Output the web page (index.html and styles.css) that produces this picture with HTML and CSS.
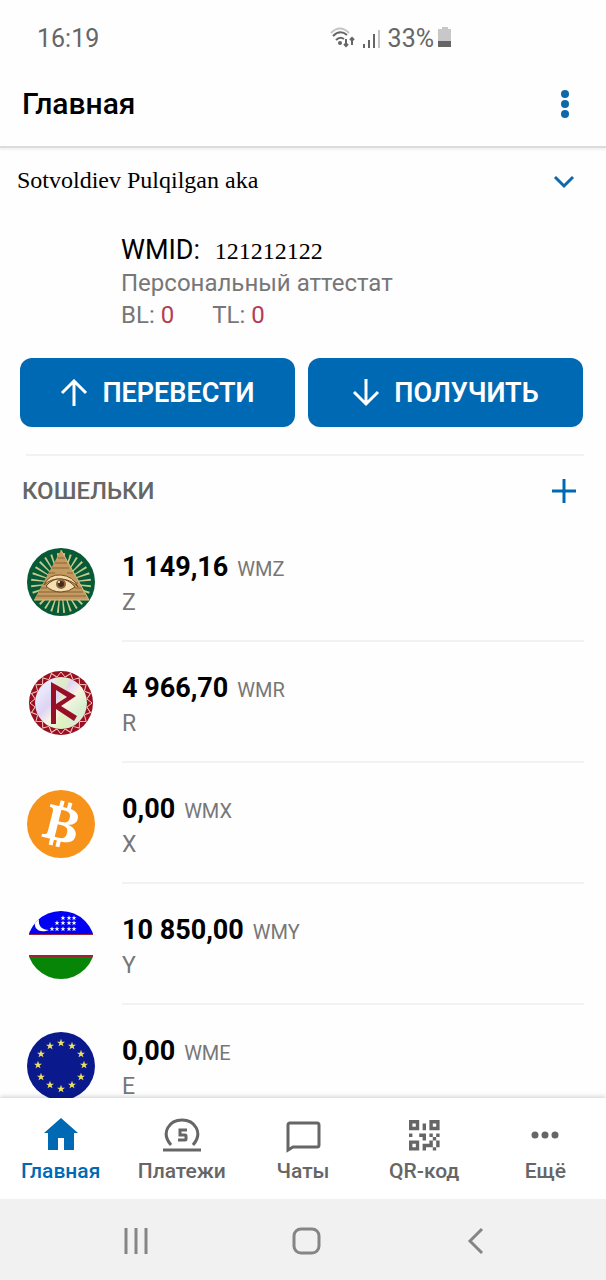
FILE: index.html
```html
<!DOCTYPE html>
<html lang="ru">
<head>
  <meta charset="UTF-8">
  <title>Главная</title>
  <meta name="viewport" content="width=device-width,initial-scale=1">
  <link rel="stylesheet" href="styles.css">
</head>
<body>
  <div class="status-bar">
    <span>16:19</span>
    <div class="status-icons">
      <svg class="wifi" width="28" height="24" viewBox="0 0 28 24" fill="none" stroke-width="2">
        <path d="M2 7Q11-2 20 7" stroke="#c4c4c4"/>
        <path d="M4 10Q11 3 18 9M7 14Q11 10 15 13" stroke="#666"/>
        <circle cx="11" cy="17" r="2" fill="#666"/>
        <path d="M17 13v7M15 18l2 2 2-2M23 19v-7M21 14l2-2 2 2" stroke="#666"/>
      </svg>
      <svg class="signal" width="20" height="22" viewBox="0 0 20 22" stroke-width="2">
        <path d="M3 17v4M8 13v8M13 7v14" stroke="#666"/>
        <path d="M18 3v18" stroke="#c4c4c4"/>
      </svg>
      <span>33%</span>
      <svg class="battery" width="14" height="24" viewBox="0 0 14 24">
        <path d="M4 1h6v2h3v13H0V3h4z" fill="#c8c8c8"/>
        <path d="M0 15h13v6H0z" fill="#666"/>
      </svg>
    </div>
  </div>

  <header class="header">
    <h1>Главная</h1>
    <button class="icon-btn" aria-label="Меню">
      <svg width="28" height="32" viewBox="0 0 28 32" fill="#0f68a8">
        <circle cx="14" cy="6" r="4"/><circle cx="14" cy="16" r="4"/><circle cx="14" cy="26" r="4"/>
      </svg>
    </button>
  </header>

  <main class="content">
    <div class="owner">
      <span>Sotvoldiev Pulqilgan aka</span>
      <button class="icon-btn" aria-label="Развернуть">
        <svg width="28" height="28" viewBox="0 0 28 28" fill="none" stroke="#0f68a8" stroke-width="3">
          <path d="M5 11l9 9 9-9"/>
        </svg>
      </button>
    </div>

    <div class="passport">
      <div class="wmid">WMID: <span class="wmid-number">121212122</span></div>
      <div>Персональный аттестат</div>
      <div class="levels"><span>BL: <b>0</b></span><span>TL: <b>0</b></span></div>
    </div>

    <div class="actions">
      <button>
        <svg width="28" height="28" viewBox="0 0 28 28" fill="none" stroke="#fff" stroke-width="3">
          <path d="M14 27V2M2 14L14 2l12 12"/>
        </svg>
        ПЕРЕВЕСТИ
      </button>
      <button>
        <svg width="28" height="28" viewBox="0 0 28 28" fill="none" stroke="#fff" stroke-width="3">
          <path d="M14 0v25M2 13l12 12 12-12"/>
        </svg>
        ПОЛУЧИТЬ
      </button>
    </div>

    <section class="wallets">
      <div class="wallets-head">
        <h2>КОШЕЛЬКИ</h2>
        <button class="icon-btn" aria-label="Добавить">
          <svg width="28" height="28" viewBox="0 0 28 28" stroke="#0069b4" stroke-width="3">
            <path d="M14 2v24M2 14h24"/>
          </svg>
        </button>
      </div>

      <ul>
        <li>
          <svg class="coin" viewBox="0 0 68 68">
            <defs>
              <path id="ray" d="M0 0L-1-30H1z"/>
              <g id="rays">
                <use href="#ray" transform="rotate(6)"/>
                <use href="#ray" transform="rotate(19)"/>
                <use href="#ray" transform="rotate(32)"/>
                <use href="#ray" transform="rotate(45)"/>
                <use href="#ray" transform="rotate(58)"/>
                <use href="#ray" transform="rotate(71)"/>
                <use href="#ray" transform="rotate(84)"/>
              </g>
            </defs>
            <circle cx="34" cy="34" r="34" fill="#075a35"/>
            <g transform="translate(34 35)" fill="#c3cb8e">
              <use href="#rays"/>
              <use href="#rays" transform="rotate(90)"/>
              <use href="#rays" transform="rotate(180)"/>
              <use href="#rays" transform="rotate(270)"/>
            </g>
            <path d="M34 2L62 52H7z" fill="#c49a60"/>
            <path d="M31 10h7M28 15h12M25 20h17M22 25h6M40 25h6M17 35h3M48 35h3M14 40h6M48 40h7M12 44h44M10 48h49" stroke="#8a6538"/>
            <path d="M34 2L62 52H7" fill="none" stroke="#dfbd82"/>
            <path d="M17 37Q22 26 34 27q12 1 17 12-6-7-16-8-11-1-18 6z" fill="#f3dca9" stroke="#755027"/>
            <path d="M19 38q7-8 15-7 9 1 14 8-6 5-14 5-9 0-15-6z" fill="#f5dfb0" stroke="#684520" stroke-width="1"/>
            <circle cx="34" cy="36" r="5" fill="#8d663b"/>
            <circle cx="34" cy="36" r="3" fill="#432c18"/>
            <circle cx="32" cy="34" r="1" fill="#fff"/>
          </svg>
          <div class="wallet">
            <div class="sum"><strong>1 149,16</strong><small>WMZ</small></div>
            <div>Z</div>
          </div>
        </li>
        <li>
          <svg class="coin" viewBox="0 0 68 68">
            <defs>
              <linearGradient id="holo" x1="0" y1="0" x2="1" y2="1">
                <stop offset="0" stop-color="#f6d5ee"/>
                <stop offset=".2" stop-color="#e8e9fb"/>
                <stop offset=".4" stop-color="#ded3f4"/>
                <stop offset=".55" stop-color="#f8f3e4"/>
                <stop offset=".75" stop-color="#d5f0ce"/>
                <stop offset="1" stop-color="#f7d8e4"/>
              </linearGradient>
              <path id="tooth" d="M-4-26L0-31l4 5"/>
              <g id="teeth">
                <use href="#tooth"/>
                <use href="#tooth" transform="rotate(18)"/>
                <use href="#tooth" transform="rotate(36)"/>
                <use href="#tooth" transform="rotate(54)"/>
                <use href="#tooth" transform="rotate(72)"/>
              </g>
            </defs>
            <circle cx="34" cy="34" r="32" fill="#970f24"/>
            <circle cx="34" cy="34" r="26" fill="url(#holo)"/>
            <path d="M34 34L28 9h15zM34 34l-5 25h14z" fill="#dff3b4" opacity=".6"/>
            <g transform="translate(34 34)" fill="none" stroke="#fbc9b4">
              <use href="#teeth"/>
              <use href="#teeth" transform="rotate(90)"/>
              <use href="#teeth" transform="rotate(180)"/>
              <use href="#teeth" transform="rotate(270)"/>
            </g>
            <path fill-rule="evenodd" d="M24 13L49 27 34 37 50 47 47 52 29 40V55H24zM29 21V35L40 28z" fill="#970f24"/>
          </svg>
          <div class="wallet">
            <div class="sum"><strong>4 966,70</strong><small>WMR</small></div>
            <div>R</div>
          </div>
        </li>
        <li>
          <svg class="coin" viewBox="0 0 68 68">
            <circle cx="34" cy="34" r="34" fill="#f7931a"/>
            <g transform="translate(34 34) rotate(14)" fill="#fff">
              <path fill-rule="evenodd" d="M-15-17H3c8 0 12 3 12 8 0 4-3 7-8 8 6 1 10 4 10 9 0 6-5 9-12 9h-21v-3c4 0 5-1 5-4v-20c0-3-1-4-4-4zM-3-14V-2h3c5 0 7-2 7-6s-2-6-6-6zM-3 1v13h4c5 0 7-2 7-7 0-4-2-6-7-6z"/>
              <path d="M-6-23h4v7h-4zM2-23h4v7H2zM-7 16h4v7h-4zM0 16h4v7H0z"/>
            </g>
          </svg>
          <div class="wallet">
            <div class="sum"><strong>0,00</strong><small>WMX</small></div>
            <div>X</div>
          </div>
        </li>
        <li>
          <svg class="coin" viewBox="0 0 68 68">
            <defs>
              <clipPath id="round"><circle cx="34" cy="34" r="34"/></clipPath>
              <path id="star" d="M0-10L2.4-3.2 9.5-3 3.8 1.2 5.9 8 0 4-5.9 8-3.8 1.2-9.5-3-2.4-3.2z"/>
              <g id="flag-star"><use href="#star" transform="scale(.27)"/></g>
            </defs>
            <g clip-path="url(#round)">
              <path d="M2 0h64v23H2z" fill="#0000f5"/>
              <path d="M2 23h64v1H2zM2 44h64v2H2z" fill="#9b2335"/>
              <path d="M2 46h64v22H2z" fill="#078507"/>
              <path d="M9 9c-4 8 3 14 13 10-7 0-11-4-10-11z" fill="#fff"/>
              <g fill="#fff">
                <use href="#flag-star" x="36" y="7"/><use href="#flag-star" x="42" y="7"/><use href="#flag-star" x="47" y="7"/>
                <use href="#flag-star" x="30" y="12"/><use href="#flag-star" x="36" y="12"/><use href="#flag-star" x="42" y="12"/><use href="#flag-star" x="47" y="12"/>
                <use href="#flag-star" x="25" y="18"/><use href="#flag-star" x="30" y="18"/><use href="#flag-star" x="36" y="18"/><use href="#flag-star" x="42" y="18"/><use href="#flag-star" x="47" y="18"/>
              </g>
            </g>
          </svg>
          <div class="wallet">
            <div class="sum"><strong>10 850,00</strong><small>WMY</small></div>
            <div>Y</div>
          </div>
        </li>
        <li>
          <svg class="coin" viewBox="0 0 68 68">
            <defs>
              <g id="eu-star"><use href="#star" transform="scale(.42)"/></g>
            </defs>
            <circle cx="34" cy="34" r="34" fill="#0a1a8c"/>
            <g fill="#ecdf62">
              <use href="#eu-star" x="34" y="11"/><use href="#eu-star" x="45" y="14"/>
              <use href="#eu-star" x="54" y="22"/><use href="#eu-star" x="57" y="33"/>
              <use href="#eu-star" x="54" y="45"/><use href="#eu-star" x="45" y="53"/>
              <use href="#eu-star" x="34" y="57"/><use href="#eu-star" x="23" y="53"/>
              <use href="#eu-star" x="14" y="45"/><use href="#eu-star" x="11" y="33"/>
              <use href="#eu-star" x="14" y="22"/><use href="#eu-star" x="23" y="14"/>
            </g>
          </svg>
          <div class="wallet">
            <div class="sum"><strong>0,00</strong><small>WME</small></div>
            <div>E</div>
          </div>
        </li>
      </ul>
    </section>
  </main>

  <nav class="tabs">
    <a href="#" class="active">
      <svg width="40" height="36" viewBox="0 0 40 36" fill="currentColor">
        <path d="M20 1l17 15h-4v17H23V21h-6v12H7V16H3z"/>
      </svg>
      Главная
    </a>
    <a href="#">
      <svg width="40" height="36" viewBox="0 0 40 36" fill="none" stroke="currentColor" stroke-width="3">
        <path d="M9 28C-2 15 8 3 20 3s22 12 11 25M1 33h38"/>
        <path d="M25 13h-7v5h5q1 0 1 1v3q0 1-1 1h-7"/>
      </svg>
      Платежи
    </a>
    <a href="#">
      <svg width="40" height="36" viewBox="0 0 40 36" fill="none" stroke="currentColor" stroke-width="3">
        <path d="M5 33V8q0-2 2-2h27q2 0 2 2v20q0 2-2 2H10z"/>
      </svg>
      Чаты
    </a>
    <a href="#">
      <svg width="40" height="36" viewBox="0 0 40 36" fill="currentColor">
        <path transform="translate(5 3) scale(3.400)" fill-rule="evenodd" d="M0 0h3v3H0zM1 1v1h1V1zM6 0h3v3H6zM7 1v1h1V1zM0 6h3v3H0zM1 7v1h1V7zM4 1h1v2H4zM0 4h1v1H0zM3 4h2v2H4V5H3zM6 4h1v1H6zM8 4h1v1H8zM7 5h1v1H7zM6 6h1v2H5v1H4V7h2zM8 6h1v2H8zM7 8h1v1H7z"/>
      </svg>
      QR-код
    </a>
    <a href="#">
      <svg width="40" height="36" viewBox="0 0 40 36" fill="currentColor">
        <circle cx="10" cy="18" r="3.500"/><circle cx="20" cy="18" r="3.500"/><circle cx="30" cy="18" r="3.500"/>
      </svg>
      Ещё
    </a>
  </nav>

  <div class="system-nav">
    <button aria-label="Недавние">
      <svg width="30" height="30" viewBox="0 0 30 30" stroke="#858585" stroke-width="3">
        <path d="M5 2v26M15 2v26M25 2v26"/>
      </svg>
    </button>
    <button aria-label="Домой">
      <svg width="30" height="30" viewBox="0 0 30 30" fill="none" stroke="#858585" stroke-width="3">
        <rect x="3" y="3" width="25" height="24" rx="7"/>
      </svg>
    </button>
    <button aria-label="Назад">
      <svg width="30" height="30" viewBox="0 0 30 30" fill="none" stroke="#858585" stroke-width="3">
        <path d="M21 3L9 15l12 12"/>
      </svg>
    </button>
  </div>
</body>
</html>
```
FILE: styles.css
```css
* { box-sizing:border-box; margin:0; padding:0; }
html, body { height:100%; }
body {
  display:flex; flex-direction:column;
  background:#fefefe; color:#000;
  font-family:Roboto,sans-serif;
}
svg { display:block; flex:none; }
button { border:none; background:none; font:inherit; cursor:pointer; }
.icon-btn { padding:4px; }

.status-bar { display:flex; flex:none; justify-content:space-between; align-items:center; height:76px; padding:0 154px 0 37px; font-size:25px; color:#666; }
.status-icons { display:flex; align-items:center; }
.signal { margin:0 7px 0 4px; }
.battery { margin-left:4px; }

.header { display:flex; justify-content:space-between; align-items:center; height:72px; flex:none; padding:0 23px 14px 22px; border-bottom:2px solid #dcdcdc; box-shadow:0 2px 2px rgba(0,0,0,.05); }
.header h1 { font-size:30px; font-weight:500; line-height:32px; }

.content { flex:1; min-height:0; overflow-y:auto; scrollbar-width:none; }
.owner { display:flex; justify-content:space-between; align-items:center; height:64px; padding:0 24px 0 17px; font-family:"Liberation Serif",serif; font-size:24px; }

.passport { padding:22px 22px 0 121px; font-size:24px; line-height:32px; color:#777; }
.wmid { font-size:27px; color:#000; }
.wmid-number { margin-left:8px; font-family:"Liberation Serif",serif; font-size:24px; }
.levels { display:flex; gap:38px; }
.levels b { font-weight:400; color:#b93a50; }

.actions { display:flex; gap:13px; padding:27px 23px 27px 20px; }
.actions button { flex:1; display:flex; align-items:center; justify-content:center; gap:14px; height:69px; border-radius:12px; background:#0069b4; color:#fff; font-size:27px; font-weight:600; }

.wallets { margin:0 22px; }
.wallets-head { display:flex; justify-content:space-between; align-items:center; height:67px; padding:4px 2px 0 0; margin-left:4px; border-top:2px solid #f2f2f2; }
.wallets-head h2 { margin-left:-4px; font-size:24px; font-weight:500; color:#666; }
.wallets ul { list-style:none; }
.wallets li { display:flex; padding-left:5px; gap:27px; }
.coin { width:68px; height:68px; margin-top:27px; }
.wallet { flex:1; height:121px; padding-top:29px; border-bottom:2px solid #f2f2f2; font-size:23px; line-height:34px; color:#777; }
.sum { display:flex; align-items:baseline; gap:9px; }
.wallet strong { font-size:27px; font-weight:700; color:#000; }
.wallet small { font-size:20px; }

.tabs { position:relative; display:flex; flex:none; height:101px; padding-top:19px; background:#fff; box-shadow:0 -1px 5px rgba(0,0,0,.2); }
.tabs a { flex:1; display:flex; flex-direction:column; align-items:center; gap:6px; font-size:21px; font-weight:500; line-height:24px; color:#666; text-decoration:none; }
.tabs a.active { color:#0069b4; }

.system-nav { position:relative; display:flex; flex:none; align-items:center; justify-content:center; gap:140px; height:81px; padding:2px 0 0 6px; background:#f1f1f1; }
```
